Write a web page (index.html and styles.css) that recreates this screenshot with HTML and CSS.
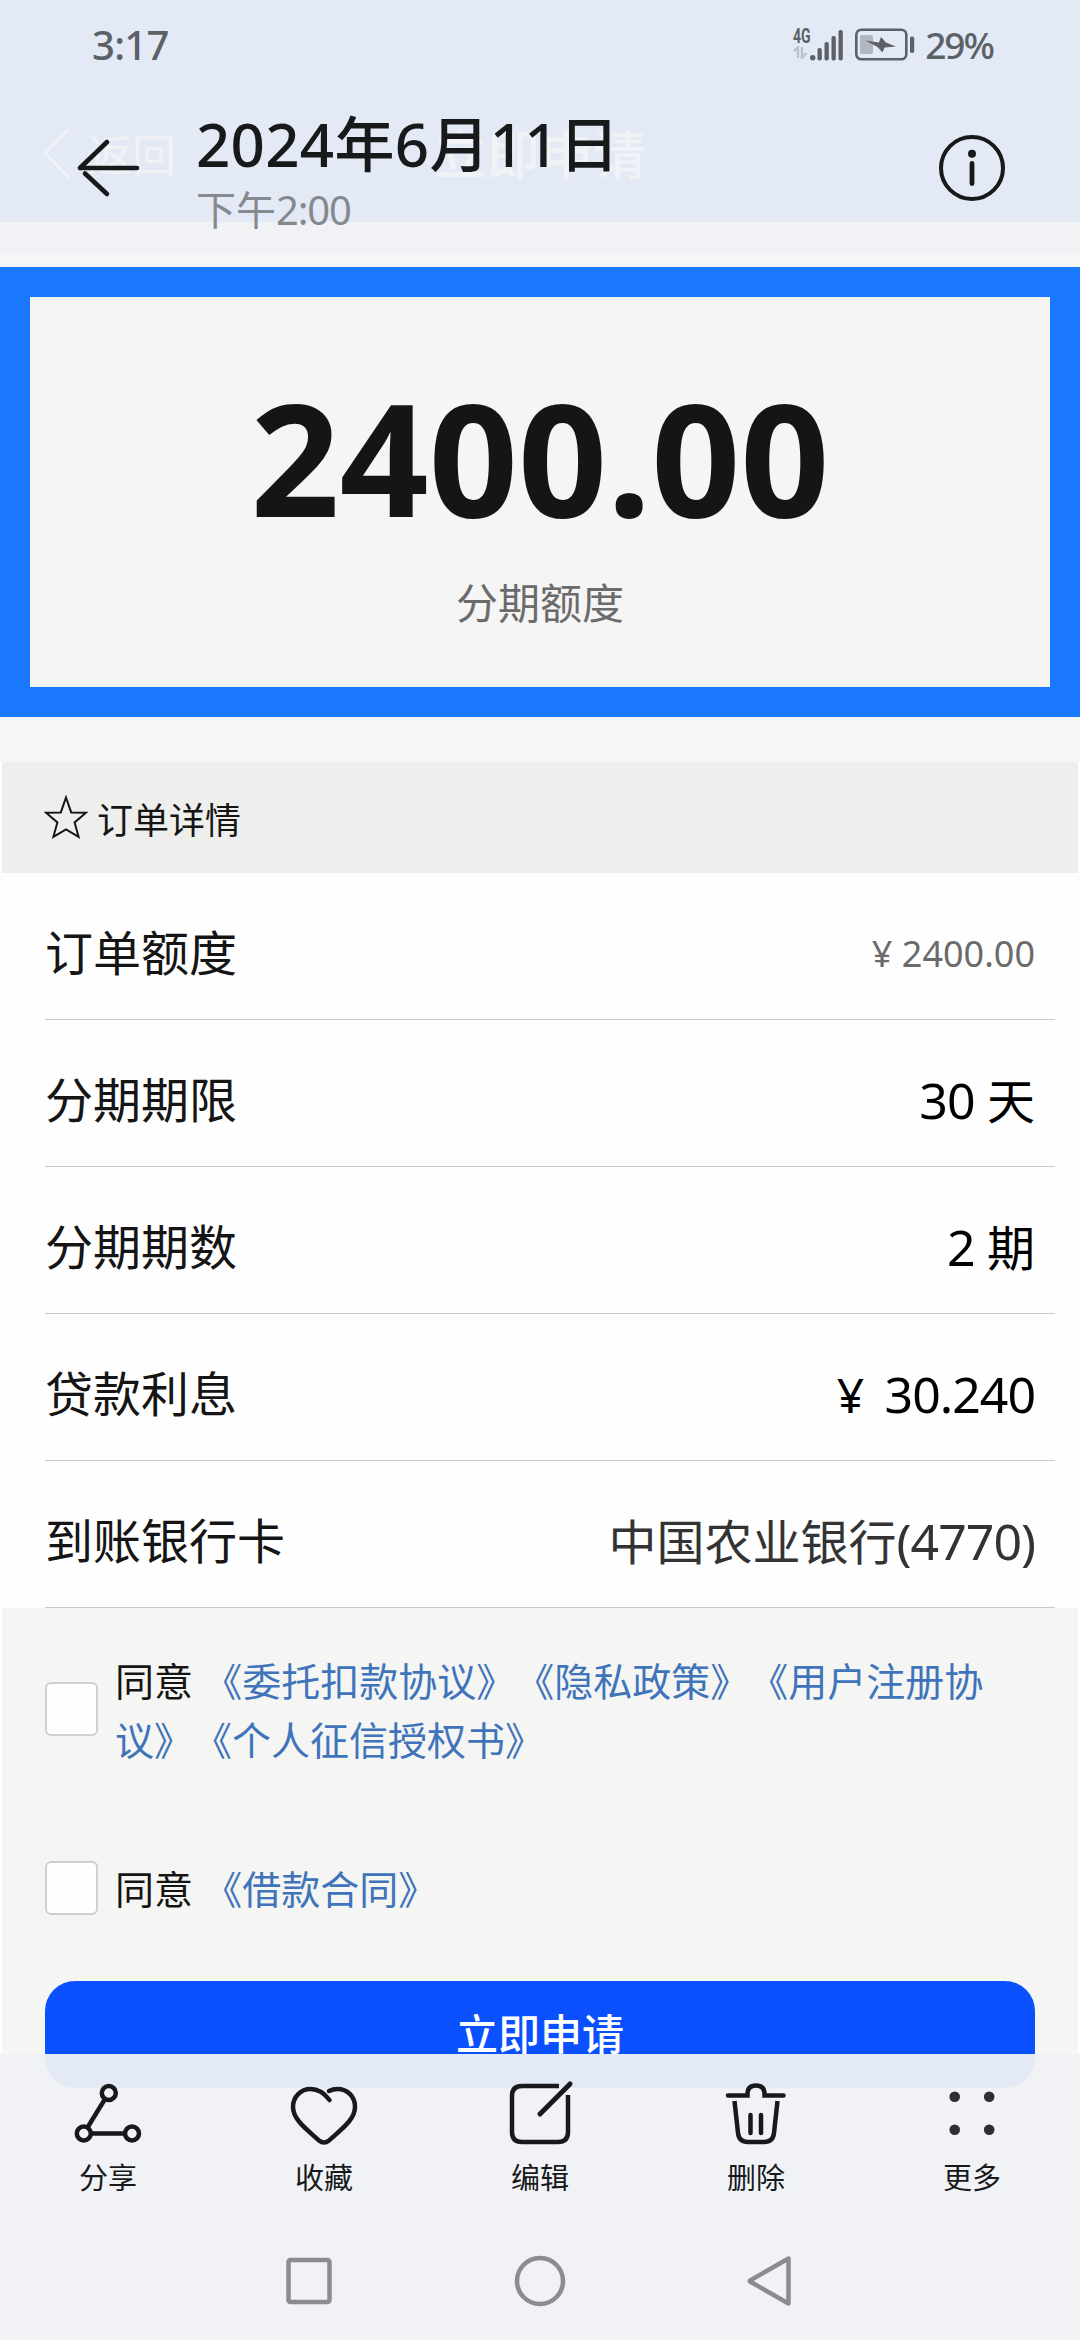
FILE: index.html
```html
<!DOCTYPE html>
<html lang="zh-CN">
<head>
<meta charset="utf-8">
<title>立即申请</title>
<link rel="stylesheet" href="styles.css">
</head>
<body>
<div class="screen">
  <main class="app">
    <header class="app-header">
      <div class="app-back">
        <svg class="app-chevron" viewBox="0 0 30 54"><path d="M28 2 3 27l25 25"/></svg>
        <span>返回</span>
      </div>
      <h1 class="app-title">立即申请</h1>
    </header>

    <section class="quota">
      <div class="quota-value">2400.00</div>
      <div class="quota-label">分期额度</div>
    </section>

    <h2 class="section-head">
      <svg class="star" viewBox="0 0 44 44"><path d="M22 2.5 27.2 17.4 42 17.7 30.6 27.4 34.6 41.8 22 34.3 9.4 41.8 13.4 27.4 2 17.7 16.8 17.4Z"/></svg>
      <span>订单详情</span>
    </h2>

    <div class="details">
      <div class="row"><span>订单额度</span><span class="value small">¥ 2400.00</span></div>
      <div class="row"><span>分期期限</span><span class="value"><span class="num">30</span> 天</span></div>
      <div class="row"><span>分期期数</span><span class="value"><span class="num">2</span> 期</span></div>
      <div class="row"><span>贷款利息</span><span class="value wide">¥ <span class="num">30.240</span></span></div>
      <div class="row"><span>到账银行卡</span><span class="value bank">中国农业银行<span class="num">(4770)</span></span></div>
    </div>

    <div class="agreements">
      <label class="agree agree-first"><span class="box"></span><span class="agree-text">同意 <a>《委托扣款协议》</a><a>《隐私政策》</a><a>《用户注册协议》</a><a>《个人征信授权书》</a></span></label>
      <label class="agree"><span class="box"></span><span class="agree-text">同意 <a>《借款合同》</a></span></label>
      <div class="apply">立即申请</div>
    </div>
  </main>

  <div class="top-overlay">
    <div class="status">
      <span class="clock">3:17</span>
      <div class="status-right">
        <div class="signal">
          <div class="network">
            <span class="net">4G</span>
            <svg class="traffic" viewBox="0 0 15 13"><path d="M1 5 5 1.500V12M9 1v11l4.500-5"/></svg>
          </div>
          <svg class="bars" viewBox="0 0 33 34" fill="#5c6168">
            <circle cx="2.700" cy="30.700" r="2.700"/>
            <rect x="7.500" y="21" width="4.300" height="12.500" rx="1.800"/>
            <rect x="14.500" y="15" width="4.300" height="18.500" rx="1.800"/>
            <rect x="21.500" y="9" width="4.300" height="24.500" rx="1.800"/>
            <rect x="28.500" y="3" width="4.300" height="30.500" rx="1.800"/>
          </svg>
        </div>
        <svg class="battery" viewBox="0 0 60 34">
          <rect x="1.300" y="2.800" width="50" height="29.500" rx="5" fill="none" stroke="#5c6168" stroke-width="2.600"/>
          <rect x="5" y="8" width="13" height="19" rx="1.500" fill="#b3b8c0"/>
          <path d="M10.500 13.500 24 15.500 26 10 31 15.500 41 19.500 29.500 20.500 27.500 25.500 22.500 20Z" fill="#5c6168"/>
          <rect x="55" y="9.500" width="4.200" height="16.500" rx="1.800" fill="#5c6168"/>
        </svg>
        <span class="percent">29%</span>
      </div>
    </div>
    <div class="titlebar">
      <svg class="back" viewBox="0 0 64 60"><path d="M61 30H4M31 4 4 30M9 35.500 31 56"/></svg>
      <div class="titles">
        <div class="date">2024年6月11日</div>
        <div class="time">下午<span class="hour">2:00</span></div>
      </div>
      <svg class="info" viewBox="0 0 68 68"><circle cx="34" cy="34" r="31" fill="none" stroke="#17191b" stroke-width="4"/><circle cx="34" cy="19.800" r="4" fill="#17191b"/><path d="M34 29.500v20" stroke="#17191b" stroke-width="4.800" stroke-linecap="round"/></svg>
    </div>
  </div>

  <div class="bottom-overlay">
    <div class="tools">
      <div class="tool">
        <svg viewBox="0 0 72 72"><circle cx="36.800" cy="17" r="7"/><circle cx="11.800" cy="57.500" r="7"/><circle cx="60" cy="57.500" r="7"/><path d="M33 23 15.500 51.500M19 57.500h34"/></svg>
        <span>分享</span>
      </div>
      <div class="tool">
        <svg viewBox="0 0 72 72"><path stroke-linecap="round" d="M41.500 24C37 18 31 13 22.500 13 13 13 5 20.500 5 31 5 43 17 52 31 64.500Q36 68.500 41 64.500C55 52 67 43 67 31 67 20 59 13 49.500 13Q45 13 41 15"/></svg>
        <span>收藏</span>
      </div>
      <div class="tool">
        <svg viewBox="0 0 72 72"><path d="M55 10H18Q8 10 8 20V56Q8 66 18 66H54Q64 66 64 56V19"/><path stroke-width="5" stroke-linecap="round" d="M36 38 66 8"/></svg>
        <span>编辑</span>
      </div>
      <div class="tool">
        <svg viewBox="0 0 72 72"><path stroke-linecap="round" d="M8 19.500H27.500V18Q27.500 9.500 36 9.500T44.500 18V19.500H63.500"/><path d="M14.500 25 18 57Q19 66 28 66H44Q53 66 54 57L57.500 25"/><path stroke-linecap="round" d="M30.500 39V57M41 39V57"/></svg>
        <span>删除</span>
      </div>
      <div class="tool">
        <svg class="dots" viewBox="0 0 72 72"><circle cx="18.700" cy="20.700" r="5.300"/><circle cx="53.200" cy="20.700" r="5.300"/><circle cx="18.700" cy="53.700" r="5.300"/><circle cx="53.200" cy="53.700" r="5.300"/></svg>
        <span>更多</span>
      </div>
    </div>
    <div class="nav">
      <svg viewBox="0 0 54 54"><rect x="5.500" y="6" width="41" height="42" rx="2"/></svg>
      <svg viewBox="0 0 54 54"><circle cx="27" cy="27" r="23"/></svg>
      <svg viewBox="0 0 54 54"><path d="M45.500 4.500V49.500L7 27.500Q6.500 27 7 26.500Z" stroke-linejoin="round"/></svg>
    </div>
  </div>
</div>
</body>
</html>
```
FILE: styles.css
```css
* { box-sizing: border-box; margin: 0; padding: 0; }
body {
  width: 1080px;
  height: 2340px;
  background: #fefefe;
  font-family: "Noto Sans", "Noto Sans CJK SC", sans-serif;
  color: #151515;
  text-spacing-trim: space-all;
}
svg { display: block; flex: none; }
.screen { position: relative; width: 1080px; height: 2340px; overflow: hidden; }

.app-header {
  height: 222px;
  padding-top: 83px;
  background: #0a50ff;
  color: #fff;
  display: grid;
  grid-template-columns: 1fr auto 1fr;
  align-items: center;
}
.app-back { display: flex; align-items: center; gap: 17px; padding-left: 42px; font-size: 44px; }
.app-chevron { width: 29px; height: 54px; fill: none; stroke: #fff; stroke-width: 3; }
.app-title { font-size: 53px; font-weight: 500; }

.quota {
  margin: 45px 0;
  height: 450px;
  border: 30px solid #1a78ff;
  background: #f5f5f5;
  display: flex;
  flex-direction: column;
  align-items: center;
  padding-top: 65px;
}
.app { background: linear-gradient(#f7f6f5 762px, transparent 762px); }
.quota-value { font-size: 156px; line-height: 190px; font-weight: 700; white-space: nowrap; }
.quota-label { font-size: 42px; line-height: 60px; margin-top: 21px; color: #6b6b6b; }

.section-head {
  margin: 0 2px;
  height: 111px;
  padding: 0 0 2px 42px;
  background: #eeeeed;
  display: flex;
  align-items: center;
  gap: 9px;
  font-size: 36px;
  font-weight: 400;
}
.star { width: 44px; height: 44px; fill: none; stroke: #151515; stroke-width: 2; }
.section-head span { padding-top: 3px; }

.details { padding: 0 25px 0 45px; }
.row {
  height: 147px;
  padding: 14px 20px 0 0;
  border-bottom: 1px solid #c9c9c9;
  display: flex;
  align-items: center;
  justify-content: space-between;
  font-size: 48px;
  line-height: 72px;
}
.value { color: #000; white-space: pre; }
.num { font-size: 50px; letter-spacing: -1px; }
.value.small { font-size: 36px; color: #6b6b6b; padding-top: 2px; }
.value.wide { word-spacing: 8px; }
.value.bank { color: #333; }

.agreements {
  margin: 0 2px;
  height: 732px;
  padding: 43px 43px 0;
  background: #f5f5f4;
}
.agree { display: flex; align-items: center; gap: 17px; font-size: 39px; line-height: 59px; }
.agree-first { margin-bottom: 90px; }
.box { width: 53px; height: 54px; margin-bottom: 2px; border: 2px solid #d0d0d0; border-radius: 6px; background: #fefefe; flex: none; }
.agree-text { width: 890px; }
.agree a { color: #3f74ba; }
.apply {
  margin-top: 63px;
  height: 107px;
  padding-bottom: 6px;
  border-radius: 30px;
  background: #0a50ff;
  color: #fff;
  font-size: 42px;
  font-weight: 500;
  display: flex;
  align-items: center;
  justify-content: center;
}

.top-overlay {
  position: absolute;
  inset: 0 0 auto;
  height: 254px;
  background: rgba(239, 241, 245, .953);
}
.status {
  height: 88px;
  padding: 0 87px 0 92px;
  display: flex;
  align-items: center;
  justify-content: space-between;
  color: #5c6168;
  font-weight: 500;
}
.clock { font-size: 40px; letter-spacing: -.7px; }
.status-right { display: flex; align-items: center; }
.signal { display: flex; height: 34px; }
.network { width: 17px; }
.net { display: block; height: 19px; font: 700 20px/19px "Roboto", "Noto Sans", sans-serif; transform: scaleX(.7); transform-origin: 0 0; }
.traffic { width: 15px; height: 13px; fill: none; stroke: #bcc1ca; stroke-width: 2.400; }
.bars { width: 33px; height: 34px; }
.battery { width: 60px; height: 34px; margin: 0 10px 0 12px; }
.percent { font-size: 37px; letter-spacing: -2px; }

.titlebar { display: flex; align-items: flex-start; padding: 14px 74px 0 76px; }
.back { width: 64px; height: 60px; margin-top: 36px; fill: none; stroke: #17191b; stroke-width: 4.600; stroke-linecap: round; stroke-linejoin: round; }
.titles { flex: 1; padding-left: 56px; }
.date { font-size: 60px; line-height: 84px; font-weight: 500; color: #17191b; white-space: nowrap; letter-spacing: .3px; }
.time { font-size: 40px; line-height: 48px; color: #85898e; }
.hour { letter-spacing: -1.200px; }
.info { width: 68px; height: 68px; margin: 32px 0 0; }

.bottom-overlay {
  position: absolute;
  inset: 2054px 0 0;
  background: rgba(239, 241, 245, .953);
}
.tools { display: grid; grid-template-columns: repeat(5, 1fr); height: 162px; padding-top: 22px; }
.tool { display: flex; flex-direction: column; align-items: center; font-size: 29px; line-height: 40px; color: #17191b; }
.tool svg { width: 72px; height: 72px; fill: none; stroke: #17191b; stroke-width: 4.500; }
.tool svg.dots { fill: #2d2f31; stroke: none; }
.tool span { margin-top: 10px; }
.nav { height: 124px; display: flex; justify-content: center; gap: 176px; padding-top: 38px; }
.nav svg { width: 54px; height: 54px; fill: none; stroke: #8b8c8d; stroke-width: 4.500; }
```
